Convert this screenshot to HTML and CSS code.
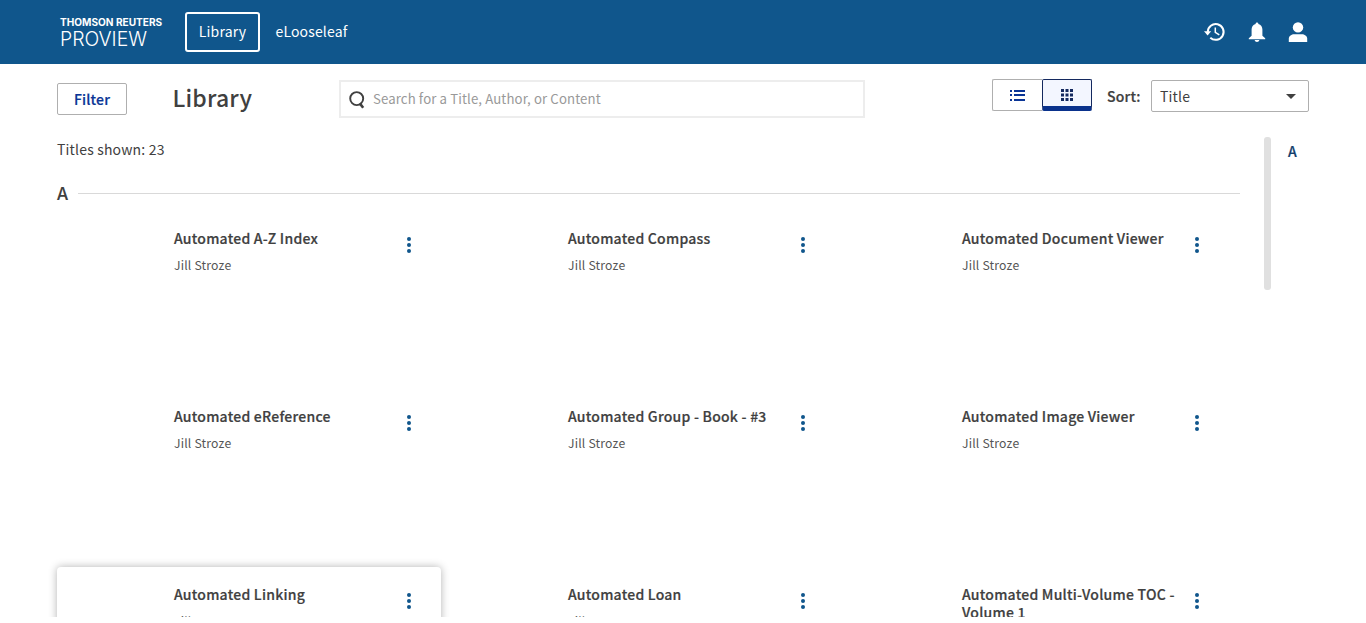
FILE: index.html
```
<!DOCTYPE html>
<html lang="en">
<head>
<meta charset="utf-8">
<title>ProView Library</title>
<link rel="stylesheet" href="styles.css">
</head>
<body>
<header class="topbar">
  <div class="logo"><span class="logo-company">THOMSON REUTERS</span><span class="logo-product">PROVIEW</span></div>
  <nav class="nav"><a class="nav-item active">Library</a><a class="nav-item loose">eLooseleaf</a></nav>
  <div class="actions">
    <svg width="22" height="22" viewBox="0 0 22 22"><path d="M3.800 11a7.900 7.900 0 1 1 2.500 5.700" fill="none" stroke="#fff" stroke-width="2"/><path d="M0 10.300h7.200L3.600 14.400z" fill="#fff"/><path d="M11.300 6.600v4.800l4 2.500" fill="none" stroke="#fff" stroke-width="1.500"/></svg>
    <svg width="18" height="20" viewBox="0 0 18 20"><path d="M9 .5c.8 0 1.400.6 1.400 1.400 2.600.7 4 2.900 4 5.600v6.300l2.800 2.500v.9H.8v-.9l2.800-2.500V7.500c0-2.700 1.400-4.900 4-5.600C7.600 1.100 8.200.5 9 .5zM6.600 18h4.800c-.3 1.200-1.200 2-2.400 2s-2.100-.8-2.400-2z" fill="#fff"/></svg>
    <svg width="20" height="20" viewBox="0 0 20 20"><circle cx="10" cy="5.400" r="5.200" fill="#fff"/><path d="M.8 20v-3.200c0-3 3-4.500 5.200-4.500h8c2.200 0 5.200 1.500 5.200 4.500V20z" fill="#fff"/></svg>
  </div>
</header>
<main class="page">
  <section class="toolbar">
    <button class="filter">Filter</button>
    <h1 class="heading">Library</h1>
    <div class="search">
      <svg width="18" height="20" viewBox="0 0 18 20"><circle cx="8.700" cy="9.600" r="6.500" fill="none" stroke="#404040" stroke-width="1.900"/><path d="M11.800 14.400l3.400 4.400" stroke="#404040" stroke-width="2.600"/></svg>
      <span class="placeholder">Search for a Title, Author, or Content</span>
    </div>
    <div class="views">
      <span class="view"><svg width="15" height="12" viewBox="0 0 15 12" fill="#0a3596"><path d="M0 1h2v2H0zM0 5h2v2H0zM0 10h2v2H0zM4 1h11v2H4zM4 5h11v2H4zM4 10h11v2H4z"/></svg></span>
      <span class="view selected"><svg width="12" height="12" viewBox="0 0 12 12" fill="#14295f"><path d="M0 0h3v3H0zM4.500 0h3v3h-3zM9 0h3v3H9zM0 4.500h3v3H0zM4.500 4.500h3v3h-3zM9 4.500h3v3H9zM0 9h3v3H0zM4.500 9h3v3h-3zM9 9h3v3H9z"/></svg></span>
    </div>
    <span class="sort-label">Sort:</span>
    <div class="select"><span>Title</span><svg width="10" height="5" viewBox="0 0 10 5"><path d="M0 0h10L5 5z" fill="#404040"/></svg></div>
  </section>
  <section class="content">
    <div class="list">
      <div class="count">Titles shown: 23</div>
      <div class="group"><span class="letter">A</span><span class="rule"></span></div>
      <div class="grid">
        <article class="card"><div class="info"><div class="title">Automated A-Z Index</div><div class="author">Jill Stroze</div></div><div class="dots"><i></i><i></i><i></i></div></article>
        <article class="card"><div class="info"><div class="title">Automated Compass</div><div class="author">Jill Stroze</div></div><div class="dots"><i></i><i></i><i></i></div></article>
        <article class="card"><div class="info"><div class="title">Automated Document Viewer</div><div class="author">Jill Stroze</div></div><div class="dots"><i></i><i></i><i></i></div></article>
        <article class="card"><div class="info"><div class="title">Automated eReference</div><div class="author">Jill Stroze</div></div><div class="dots"><i></i><i></i><i></i></div></article>
        <article class="card"><div class="info"><div class="title">Automated Group - Book - #3</div><div class="author">Jill Stroze</div></div><div class="dots"><i></i><i></i><i></i></div></article>
        <article class="card"><div class="info"><div class="title">Automated Image Viewer</div><div class="author">Jill Stroze</div></div><div class="dots"><i></i><i></i><i></i></div></article>
        <article class="card raised"><div class="info"><div class="title">Automated Linking</div><div class="author">Jill Stroze</div></div><div class="dots"><i></i><i></i><i></i></div></article>
        <article class="card"><div class="info"><div class="title">Automated Loan</div><div class="author">Jill Stroze</div></div><div class="dots"><i></i><i></i><i></i></div></article>
        <article class="card"><div class="info"><div class="title">Automated Multi-Volume TOC -<br>Volume 1</div><div class="author">Jill Stroze</div></div><div class="dots"><i></i><i></i><i></i></div></article>
      </div>
    </div>
    <div class="scroll-thumb"></div>
    <div class="index-letter">A</div>
  </section>
</main>
</body>
</html>
```
FILE: styles.css
```
* { box-sizing: border-box; }
body {
  margin: 0;
  height: 623px;
  overflow: hidden;
  background: #fff;
  color: #404040;
  font-family: "Source Sans Pro", "Noto Sans CJK SC", sans-serif;
  font-size: 14px;
  letter-spacing: .18px;
  line-height: 18px;
}
svg { display: block; flex: none; }
.topbar {
  display: flex;
  align-items: center;
  height: 64px;
  padding: 0 58px 0 60px;
  background: #10568c;
  color: #fff;
}
.logo {
  display: flex;
  flex-direction: column;
  width: 125px;
  padding-top: 1px;
  font-family: Inter, sans-serif;
  letter-spacing: 0;
  white-space: nowrap;
}
.logo-company { font-size: 10.100px; font-weight: 650; line-height: 12px; }
.logo-product { font-size: 19.400px; font-weight: 300; line-height: 22px; }
.nav { display: flex; align-items: center; }
.nav-item { white-space: nowrap; }
.active {
  width: 75px;
  height: 40px;
  border: 2px solid #fff;
  border-radius: 3px;
  line-height: 34px;
  text-align: center;
}
.loose { margin-left: 15.500px; line-height: 34px; padding-bottom: 2px; letter-spacing: .15px; }
.actions { display: flex; align-items: center; gap: 22px; margin-left: auto; }

.page { padding: 0 57px; }
.toolbar { display: flex; align-items: flex-start; height: 73px; padding-top: 15px; white-space: nowrap; }
.filter {
  width: 70px;
  height: 32px;
  margin-top: 4px;
  padding: 0;
  border: 1px solid #afafaf;
  border-radius: 2px;
  background: #fff;
  color: #0a3596;
  font: 500 14px/30px "Source Sans Pro", "Noto Sans CJK SC", sans-serif;
  letter-spacing: .18px;
  -webkit-text-stroke: .2px;
}
.heading { width: 166.500px; margin: 3px 0 0 45.500px; font-size: 23px; font-weight: 500; line-height: 30px; }
.search {
  display: flex;
  align-items: center;
  width: 526px;
  height: 38px;
  margin-top: 1px;
  padding-left: 7px;
  border: 2px solid #ededed;
}
.placeholder { margin-left: 7px; color: #999; font-size: 13.200px; letter-spacing: .12px; }
.views { display: flex; width: 100px; margin-left: auto; }
.view {
  display: flex;
  align-items: center;
  justify-content: center;
  width: 50px;
  height: 32px;
  border: 1px solid #afafaf;
  border-right: 0;
  border-radius: 2px 0 0 2px;
}
.selected {
  border: 1px solid #14295f;
  border-bottom: 5px solid #0a328c;
  border-radius: 2px;
  background: #f3f6ff;
  padding-top: 4px;
}
.sort-label { width: 44px; margin: 8px 0 0 15px; font-weight: 500; -webkit-text-stroke: .2px; }
.select {
  display: flex;
  align-items: center;
  justify-content: space-between;
  width: 158px;
  height: 32px;
  margin-top: 1px;
  padding: 0 12px 0 8px;
  border: 1px solid #afafaf;
  border-radius: 2px;
}

.content { display: flex; height: 480px; overflow: hidden; margin-left: -12px; padding-left: 12px; }
.list { width: 1183px; }
.count { height: 46px; padding-top: 3px; }
.group { display: flex; align-items: center; height: 20px; }
.letter { width: 21px; padding-bottom: 2px; font-size: 17.800px; font-weight: 500; }
.rule { flex: 1; height: 1px; background: #d9d9d9; }
.grid { display: grid; grid-template-columns: repeat(3, 384px); grid-auto-rows: 168px; gap: 10px; margin-top: 8px; }
.card { display: flex; padding: 18px 30px 0 117px; border-radius: 4px; }
.raised { box-shadow: 0 0 9px rgba(0, 0, 0, .3); }
.info { flex: 1; white-space: nowrap; }
.title { font-weight: 500; letter-spacing: .24px; -webkit-text-stroke: .2px; }
.author { margin-top: 9px; color: #555; font-size: 12.200px; }
.dots { display: flex; flex-direction: column; gap: 2px; padding-top: 8px; }
.dots i { width: 4px; height: 4px; border-radius: 50%; background: #10568c; }
.scroll-thumb { width: 7px; height: 153px; margin-left: 24px; border-radius: 3px; background: #e0e0e0; }
.index-letter { margin: 5px 0 0 17px; color: #123e6c; font-weight: 500; -webkit-text-stroke: .2px; }
```
